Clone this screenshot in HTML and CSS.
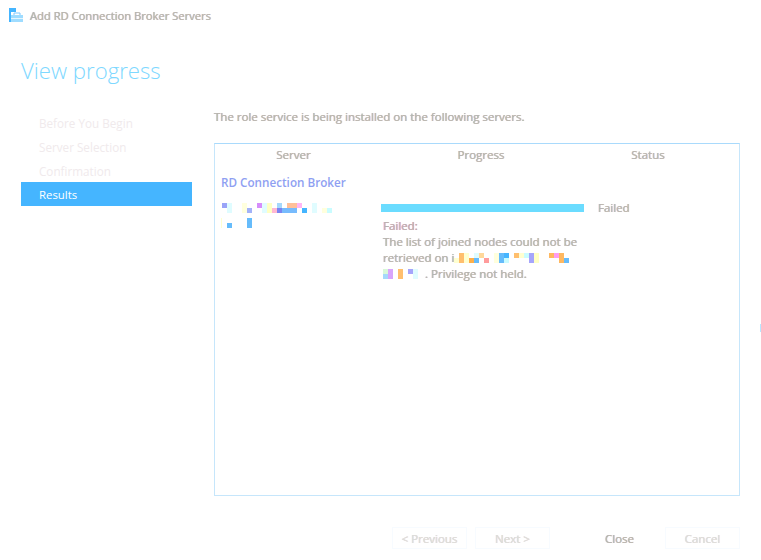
FILE: index.html
```html
<!DOCTYPE html>
<html lang="en">
<head>
<meta charset="utf-8">
<title>Add RD Connection Broker Servers</title>
<link rel="stylesheet" href="styles.css">
</head>
<body>
<div class="window">
  <header class="titlebar">
    <svg class="app-icon" width="15" height="15" viewBox="0 0 15 15">
      <rect x="0" y="0" width="7" height="4" fill="#45b5ff"/>
      <rect x="0" y="4" width="2" height="10" fill="#45b5ff"/>
      <path d="M2 7h12v7H2z" fill="#9fdcff"/>
      <path d="M5 7V5h6v2" fill="none" stroke="#7cc8ff"/>
      <rect x="2" y="10" width="12" height="1" fill="#e4f6ff"/>
    </svg>
    <span class="window-title">Add RD Connection Broker Servers</span>
  </header>
  <h1 class="page-title">View progress</h1>
  <div class="content">
    <nav class="steps">
      <div class="step">Before You Begin</div>
      <div class="step">Server Selection</div>
      <div class="step">Confirmation</div>
      <div class="step active">Results</div>
    </nav>
    <main class="main">
      <p class="intro">The role service is being installed on the following servers.</p>
      <section class="panel">
        <div class="columns">
          <div class="col-server">Server</div>
          <div class="col-progress">Progress</div>
          <div class="col-status">Status</div>
        </div>
        <div class="group">RD Connection Broker</div>
        <div class="row">
          <div class="col-server">
            <svg class="redact" width="112" height="25" viewBox="220 203 112 25" role="img" aria-label="redacted server name">
              <g shape-rendering="crispEdges">
                <rect x="222" y="203" width="5" height="5" fill="#99a4f8"/>
                <rect x="227" y="203" width="5" height="10" fill="#dffcff"/>
                <rect x="242" y="203" width="5" height="10" fill="#ffffdd"/>
                <rect x="247" y="208" width="5" height="5" fill="#a3b2f8"/>
                <rect x="257" y="203" width="5" height="5" fill="#d68dfb"/>
                <rect x="262" y="203" width="5" height="10" fill="#e0fcff"/>
                <rect x="267" y="203" width="5" height="10" fill="#ffffc4"/>
                <rect x="272" y="208" width="5" height="5" fill="#ffb8d3"/>
                <rect x="277" y="203" width="5" height="5" fill="#a5d8fb"/>
                <rect x="277" y="208" width="5" height="5" fill="#7b84f0"/>
                <rect x="282" y="208" width="15" height="5" fill="#77bbfd"/>
                <rect x="287" y="203" width="10" height="5" fill="#ffc09a"/>
                <rect x="297" y="203" width="5" height="5" fill="#ffb5f5"/>
                <rect x="302" y="208" width="5" height="5" fill="#45b5ff"/>
                <rect x="312" y="203" width="5" height="10" fill="#e0fcff"/>
                <rect x="322" y="208" width="5" height="5" fill="#ffffdd"/>
                <rect x="327" y="208" width="5" height="5" fill="#c9fcff"/>
                <rect x="221" y="218" width="1" height="10" fill="#ffffd0"/>
                <rect x="227" y="223" width="5" height="5" fill="#66bcfb"/>
                <rect x="247" y="218" width="5" height="10" fill="#66bcfb"/>
              </g>
            </svg>
          </div>
          <div class="col-progress">
            <div class="bar"></div>
            <div class="detail">
              <div class="detail-fail">Failed:</div>
              <div>The list of joined nodes could not be</div>
              <div class="detail-line">retrieved on i<svg class="redact-inline" width="115" height="10" viewBox="453 253 115 10" role="img" aria-label="redacted">
                <g shape-rendering="crispEdges">
                  <rect x="453" y="258" width="5" height="5" fill="#ffffd0"/>
                  <rect x="458" y="253" width="5" height="10" fill="#ffbf6e"/>
                  <rect x="463" y="253" width="5" height="10" fill="#ffffd0"/>
                  <rect x="468" y="258" width="5" height="5" fill="#ffb04a"/>
                  <rect x="473" y="253" width="5" height="5" fill="#dffcff"/>
                  <rect x="473" y="258" width="5" height="5" fill="#66bcfb"/>
                  <rect x="478" y="253" width="5" height="5" fill="#ffd89a"/>
                  <rect x="483" y="258" width="5" height="5" fill="#ff9c9c"/>
                  <rect x="493" y="253" width="5" height="10" fill="#ffffdd"/>
                  <rect x="498" y="253" width="5" height="10" fill="#66bcfb"/>
                  <rect x="503" y="253" width="5" height="5" fill="#45b5ff"/>
                  <rect x="503" y="258" width="5" height="5" fill="#c9fcff"/>
                  <rect x="513" y="253" width="5" height="5" fill="#ffbf6e"/>
                  <rect x="518" y="253" width="5" height="5" fill="#ffffd0"/>
                  <rect x="523" y="253" width="5" height="5" fill="#c9fcff"/>
                  <rect x="528" y="253" width="5" height="10" fill="#a5a5fb"/>
                  <rect x="533" y="253" width="5" height="10" fill="#ffffc4"/>
                  <rect x="548" y="253" width="5" height="5" fill="#ffb860"/>
                  <rect x="553" y="253" width="5" height="5" fill="#ff9cf0"/>
                  <rect x="558" y="253" width="5" height="10" fill="#ffb860"/>
                  <rect x="563" y="258" width="5" height="5" fill="#66bcfb"/>
                </g>
              </svg></div>
              <div class="detail-line"><svg class="redact-inline" width="35" height="10" viewBox="383 268 35 10" role="img" aria-label="redacted">
                <g shape-rendering="crispEdges">
                  <rect x="383" y="268" width="5" height="5" fill="#d8f8d8"/>
                  <rect x="383" y="273" width="5" height="5" fill="#a5d8fb"/>
                  <rect x="388" y="268" width="5" height="10" fill="#d8a5fb"/>
                  <rect x="398" y="268" width="5" height="10" fill="#ffbf6e"/>
                  <rect x="408" y="268" width="5" height="5" fill="#a5a5fb"/>
                  <rect x="413" y="268" width="5" height="10" fill="#dffcff"/>
                </g>
              </svg><span class="after-redact">. Privilege not held.</span></div>
            </div>
          </div>
          <div class="col-status">Failed</div>
        </div>
      </section>
    </main>
  </div>
  <footer class="buttons">
    <div class="btn disabled">&lt; Previous</div>
    <div class="btn disabled">Next &gt;</div>
    <div class="btn primary">Close</div>
    <div class="btn disabled">Cancel</div>
  </footer>
</div>
<div class="edge-mark"></div>
</body>
</html>
```
FILE: styles.css
```css
* { box-sizing: border-box; }
html, body { margin: 0; padding: 0; background: #fff; }
body {
  position: relative;
  width: 761px;
  height: 560px;
  overflow: hidden;
  font-family: "Open Sans", "Liberation Sans", sans-serif;
  font-size: 11.5px;
  font-weight: 400;
  color: #b4b4b4;
}
.window { display: flex; flex-direction: column; height: 560px; }
.titlebar {
  display: flex;
  align-items: center;
  gap: 6px;
  height: 15px;
  margin: 8px 0 0 9px;
  font-size: 11.2px;
  text-shadow: .4px 0 #ffcf9e, -.4px 0 #9fd2ff;
}
.app-icon { flex: none; }
.page-title {
  margin: 28px 0 0 21px;
  height: 40px;
  font-size: 22.2px;
  line-height: 40px;
  font-weight: 300;
  color: #7ed8ff;
}
.content { display: flex; margin: 14px 0 0 21px; height: 380px; }
.steps { width: 171px; flex: none; padding-top: 5px; }
.step {
  height: 24px;
  line-height: 26px;
  padding-left: 18px;
  font-size: 11.7px;
  color: #f0eaec;
}
.step.active { background: #45b5ff; color: #fff; font-size: 11.4px; }
.main { margin-left: 22px; width: 526px; }
.intro {
  margin: 0;
  height: 38px;
  padding-top: 3px;
  line-height: 18px;
  text-shadow: .4px 0 #ffcf9e, -.4px 0 #9fd2ff;
}
.panel {
  height: 353px;
  border: 1px solid #c6e6fb;
  border-top-color: #a9dafc;
}
.columns, .row { display: flex; }
.columns {
  height: 24px;
  line-height: 22px;
  text-align: center;
  text-shadow: .4px 0 #ffcf9e, -.4px 0 #9fd2ff;
}
.col-server { width: 157px; flex: none; }
.col-progress { width: 203px; flex: none; }
.col-status { flex: none; width: 100px; }
.columns .col-progress { width: 218px; }
.columns .col-status { width: 116px; margin-left: 0; }
.group {
  height: 35px;
  padding: 4px 0 0 6px;
  line-height: 20px;
  font-size: 11.7px;
  font-weight: 600;
  color: #8f9ff2;
}
.row .col-server { padding: 0 0 0 5px; width: 166px; height: 25px; }
.redact { display: block; }
.bar { height: 8px; margin-top: 1px; background: #6bdcff; }
.detail {
  padding: 6px 0 0 2px;
  line-height: 16px;
  text-shadow: .4px 0 #ffcf9e, -.4px 0 #9fd2ff;
  white-space: nowrap;
}
.detail-fail { text-shadow: .4px 0 #ffb0a0, -.4px 0 #d8b0ff; }
.detail-line { display: flex; align-items: center; height: 16px; }
.redact-inline { flex: none; }
.after-redact { margin-left: 7px; }
.row .col-status {
  margin-left: 14px;
  line-height: 10px;
  text-shadow: .4px 0 #ffcf9e, -.4px 0 #9fd2ff;
}
.buttons { display: flex; gap: 8px; margin: 42px 0 0 392px; height: 22px; }
.btn {
  width: 75px;
  height: 22px;
  line-height: 22px;
  text-align: center;
  border: 1px solid #f7fbff;
}
.btn.disabled { color: #dcdcdc; text-shadow: .4px 0 #ffe4cc, -.4px 0 #cce6ff; }
.btn.primary {
  border-color: transparent;
  margin-left: 24px;
  color: #b4b4b4;
  text-shadow: .4px 0 #ffcf9e, -.4px 0 #9fd2ff;
}
.edge-mark {
  position: absolute;
  left: 760px;
  top: 324px;
  width: 1px;
  height: 8px;
  background: #b8e6ff;
}
```
